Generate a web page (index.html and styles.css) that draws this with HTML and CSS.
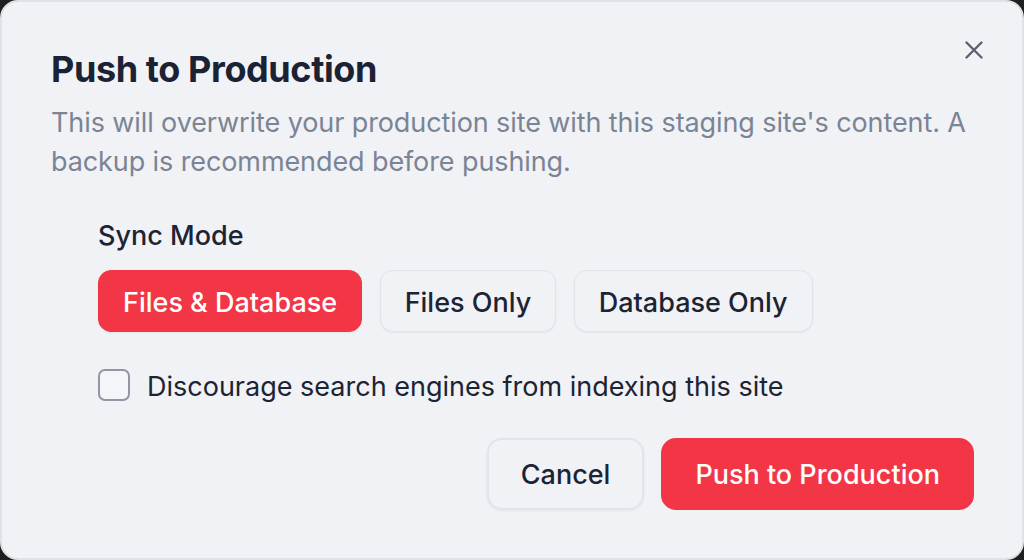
FILE: index.html
```html
<!DOCTYPE html>
<html lang="en">
<head>
<meta charset="utf-8">
<title>Push to Production</title>
<link rel="stylesheet" href="styles.css">
</head>
<body>
<div class="dialog">
  <button class="close" aria-label="Close">
    <svg width="18" height="18" viewBox="0 0 18 18" fill="none" stroke="currentColor" stroke-width="2.4" stroke-linecap="round"><path d="M1.5 1.5 L16.5 16.5 M16.5 1.5 L1.5 16.5"/></svg>
  </button>
  <h1 class="title">Push to Production</h1>
  <p class="desc">This will overwrite your production site with this staging site's content. A backup is recommended before pushing.</p>
  <div class="section">
    <div class="label">Sync Mode</div>
    <div class="modes">
      <button class="mode active">Files &amp; Database</button>
      <button class="mode">Files Only</button>
      <button class="mode">Database Only</button>
    </div>
    <label class="check">
      <span class="box"></span>
      <span class="check-text">Discourage search engines from indexing this site</span>
    </label>
  </div>
  <div class="footer">
    <button class="btn secondary">Cancel</button>
    <button class="btn primary">Push to Production</button>
  </div>
</div>
</body>
</html>
```
FILE: styles.css
```css
html, body {
  margin: 0;
  padding: 0;
  background: #1f1f1f;
}
body {
  width: 1024px;
  height: 560px;
  overflow: hidden;
  font-family: Inter, "Liberation Sans", sans-serif;
}
.dialog {
  position: relative;
  box-sizing: border-box;
  width: 1024px;
  height: 560px;
  background: #f0f2f6;
  border: 2px solid #dfe1e6;
  border-radius: 18px;
  padding: 48px 48px 48px 49px;
  display: flex;
  flex-direction: column;
}
.close {
  position: absolute;
  top: 39px;
  right: 39px;
  width: 18px;
  height: 18px;
  padding: 0;
  border: 0;
  background: transparent;
  color: #5a6170;
  display: flex;
  align-items: center;
  justify-content: center;
}
.title {
  margin: 0;
  font-size: 36px;
  line-height: 38px;
  font-weight: 700;
  color: #1a2233;
  letter-spacing: -0.4px;
}
.desc {
  margin: 15px -6px 0 0;
  font-size: 27px;
  line-height: 39px;
  color: #7b8494;
  letter-spacing: -0.1px;
}
.section {
  padding-left: 47px;
  margin-top: 36px;
}
.label {
  font-size: 27px;
  line-height: 36px;
  padding-top: 1px;
  height: 35px;
  color: #1c2434;
  font-weight: 500;
}
.modes {
  display: flex;
  gap: 17.5px;
  margin-top: 17px;
}
.mode {
  font-family: inherit;
  font-size: 27px;
  line-height: 36px;
  font-weight: 500;
  color: #1c2434;
  background: #f0f2f6;
  border: 1.5px solid #e1e3e8;
  border-radius: 13px;
  padding: 13.5px 24px 10.5px;
  box-shadow: 0 1px 2px rgba(0,0,0,0.05);
}
.mode.active {
  background: #f23646;
  border-color: #f23646;
  color: #ffffff;
}
.check {
  display: flex;
  align-items: center;
  gap: 17px;
  margin-top: 35px;
  height: 36px;
}
.box {
  box-sizing: border-box;
  width: 32px;
  height: 32px;
  border: 2px solid #8f97a5;
  border-radius: 7px;
  background: #f4f5f8;
}
.check-text {
  font-size: 27px;
  line-height: 36px;
  padding-top: 3px;
  color: #1c2434;
}
.footer {
  margin-top: auto;
  display: flex;
  justify-content: flex-end;
  gap: 17px;
}
.btn {
  font-family: inherit;
  font-size: 27px;
  line-height: 36px;
  font-weight: 500;
  border-radius: 15px;
  padding: 17px 32px 15px;
}
.btn.secondary {
  background: #f0f2f6;
  border: 2px solid #e2e4e9;
  color: #1c2434;
  box-shadow: 0 1px 3px rgba(0,0,0,0.06);
}
.btn.primary {
  background: #f23646;
  border: 2px solid #f23646;
  color: #ffffff;
}
```
